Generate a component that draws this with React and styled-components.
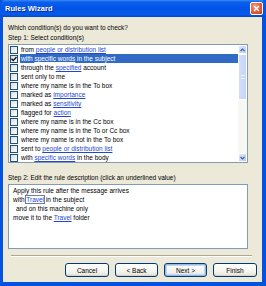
import React from "react";
import styled, { createGlobalStyle } from "styled-components";

const GlobalStyle = createGlobalStyle`
  html, body {
    margin: 0;
    padding: 0;
    background: #ffffff;
  }
  * {
    box-sizing: border-box;
  }
`;

const Window = styled.div`
  width: 266px;
  height: 286px;
  display: flex;
  flex-direction: column;
  background: #0453e0;
  padding: 0 4px 4px 3px;
  font-family: "Liberation Sans", Arial, sans-serif;
  font-size: 6.5px;
  color: #000;
  overflow: hidden;
`;

const TitleBar = styled.div`
  height: 17px;
  margin: 0 -4px 0 -3px;
  display: flex;
  align-items: center;
  justify-content: space-between;
  padding: 0 3px 0 5px;
  background: linear-gradient(#3f8cf3 0%, #0a5fec 12%, #0254e6 50%, #0659ea 85%, #0246d0 100%);
  border-radius: 5px 5px 0 0;
`;

const Title = styled.span`
  color: #fff;
  font-weight: bold;
  font-size: 7.5px;
  letter-spacing: 0.05px;
  text-shadow: 1px 1px 0 #0a2a8a;
`;

const CloseButton = styled.div`
  width: 13px;
  height: 13px;
  border: 1px solid #fff;
  border-radius: 2px;
  background: radial-gradient(circle at 35% 30%, #f29a80 0%, #e15b3b 55%, #c4401f 100%);
  display: flex;
  align-items: center;
  justify-content: center;
`;

const Body = styled.div`
  flex: 1;
  background: #ece9d8;
  padding: 6px 14px 5px 5px;
  display: flex;
  flex-direction: column;
`;

const Label = styled.div`
  height: 10px;
  line-height: 10px;
  white-space: nowrap;
  margin-top: ${(p) => p.$mt || 0}px;
`;

const ListBox = styled.div`
  margin-top: 1px;
  height: 119px;
  border: 1px solid #7f9db9;
  background: #fff;
  display: flex;
`;

const Rows = styled.div`
  flex: 1;
  display: flex;
  flex-direction: column;
`;

const Row = styled.div`
  height: 9px;
  display: flex;
  align-items: center;
  padding-left: 1px;
  white-space: nowrap;
`;

const Check = styled.span`
  width: 8px;
  height: 8px;
  border: 1px solid #1c5180;
  background: linear-gradient(135deg, #dcdcd7, #fff);
  margin-right: 2px;
  flex: none;
  display: flex;
  align-items: center;
  justify-content: center;
`;

const RowText = styled.span`
  flex: 1;
  height: 9px;
  line-height: 9px;
  padding-left: 1px;
  background: ${(p) => (p.$selected ? "#316ac5" : "transparent")};
  color: ${(p) => (p.$selected ? "#fff" : "#000")};
`;

const Link = styled.span`
  color: ${(p) => (p.$inv ? "#fff" : "#1f47d0")};
  text-decoration: underline;
`;

const Scrollbar = styled.div`
  width: 9px;
  display: flex;
  flex-direction: column;
  background: #f7f7f3;
`;

const ScrollButton = styled.div`
  height: 9px;
  background: linear-gradient(135deg, #dbe6fd, #bacdf8);
  border: 1px solid #fff;
  border-radius: 1px;
  display: flex;
  align-items: center;
  justify-content: center;
`;

const Track = styled.div`
  flex: 1;
  display: flex;
  flex-direction: column;
`;

const Thumb = styled.div`
  height: 46px;
  background: linear-gradient(90deg, #d2def9, #c6d5f8);
  border: 1px solid #fff;
  border-radius: 1px;
  display: flex;
  align-items: center;
  justify-content: center;
`;

const Grip = styled.div`
  width: 4px;
  height: 4px;
  border-top: 1px solid #eef3fe;
  border-bottom: 1px solid #eef3fe;
`;

const DescBox = styled.div`
  margin-top: 1px;
  height: 65px;
  border: 1px solid #7f9db9;
  background: #fff;
  padding: 1px 4px;
`;

const DescLine = styled.div`
  height: 9px;
  line-height: 9px;
  white-space: nowrap;
  padding-left: ${(p) => p.$indent || 0}px;
`;

const Focused = styled.span`
  outline: 1px solid #6b7fa8;
  outline-offset: 0;
`;

const Separator = styled.div`
  margin: 6px -4px 0 3px;
  height: 2px;
  border-top: 1px solid #aca899;
  border-bottom: 1px solid #fff;
`;

const ButtonRow = styled.div`
  margin: 6px -9px 0 0;
  display: flex;
  justify-content: flex-end;
  gap: 6px;
`;

const Button = styled.div`
  width: ${(p) => p.$w || 43}px;
  height: 14px;
  border: 1px solid #003c74;
  border-radius: 3px;
  background: linear-gradient(#ffffff 0%, #f5f4ee 60%, #e3e2da 100%);
  box-shadow: ${(p) =>
    p.$default ? "inset 0 0 0 1px #98b8ea, inset 0 0 0 2px #c4d6f6" : "inset 0 -1px 0 #d6d0c5"};
  display: flex;
  align-items: center;
  justify-content: center;
`;

const conditions = [
  ["from ", ["people or distribution list"]],
  ["with ", ["specific words"], " in the subject"],
  ["through the ", ["specified"], " account"],
  ["sent only to me"],
  ["where my name is in the To box"],
  ["marked as ", ["importance"]],
  ["marked as ", ["sensitivity"]],
  ["flagged for ", ["action"]],
  ["where my name is in the Cc box"],
  ["where my name is in the To or Cc box"],
  ["where my name is not in the To box"],
  ["sent to ", ["people or distribution list"]],
  ["with ", ["specific words"], " in the body"],
];

const CheckMark = () => (
  <svg width="6" height="6" viewBox="0 0 6 6">
    <path d="M0.5 2.8 L2.3 4.6 L5.5 1" fill="none" stroke="#111" strokeWidth="1.4" />
  </svg>
);

const App = () => {
  return (
    <>
      <GlobalStyle />
      <Window>
        <TitleBar>
          <Title>Rules Wizard</Title>
          <CloseButton>
            <svg width="7" height="7" viewBox="0 0 7 7">
              <path d="M1 1 L6 6 M6 1 L1 6" stroke="#fff" strokeWidth="1.4" />
            </svg>
          </CloseButton>
        </TitleBar>
        <Body>
          <Label>Which condition(s) do you want to check?</Label>
          <Label>Step 1: Select condition(s)</Label>
          <ListBox>
            <Rows>
              {conditions.map((parts, i) => {
                const selected = i === 1;
                return (
                  <Row key={i}>
                    <Check>{selected && <CheckMark />}</Check>
                    <RowText $selected={selected}>
                      {parts.map((p, j) =>
                        Array.isArray(p) ? (
                          <Link key={j} $inv={selected}>
                            {p[0]}
                          </Link>
                        ) : (
                          <span key={j}>{p}</span>
                        )
                      )}
                    </RowText>
                  </Row>
                );
              })}
            </Rows>
            <Scrollbar>
              <ScrollButton>
                <svg width="5" height="4" viewBox="0 0 5 4">
                  <path d="M0.5 3 L2.5 1 L4.5 3" fill="none" stroke="#4d6185" strokeWidth="1.2" />
                </svg>
              </ScrollButton>
              <Track>
                <Thumb>
                  <Grip />
                </Thumb>
              </Track>
              <ScrollButton>
                <svg width="5" height="4" viewBox="0 0 5 4">
                  <path d="M0.5 1 L2.5 3 L4.5 1" fill="none" stroke="#4d6185" strokeWidth="1.2" />
                </svg>
              </ScrollButton>
            </Scrollbar>
          </ListBox>
          <Label $mt={10}>Step 2: Edit the rule description (click an underlined value)</Label>
          <DescBox>
            <DescLine>Apply this rule after the message arrives</DescLine>
            <DescLine>
              with <Focused><Link>Travel</Link></Focused> in the subject
            </DescLine>
            <DescLine $indent={3}>and on this machine only</DescLine>
            <DescLine>
              move it to the <Link>Travel</Link> folder
            </DescLine>
          </DescBox>
          <Separator />
          <ButtonRow>
            <Button $w={44}>Cancel</Button>
            <Button>&lt; Back</Button>
            <Button $default>Next &gt;</Button>
            <Button $w={44}>Finish</Button>
          </ButtonRow>
        </Body>
      </Window>
    </>
  );
};

export default App;
